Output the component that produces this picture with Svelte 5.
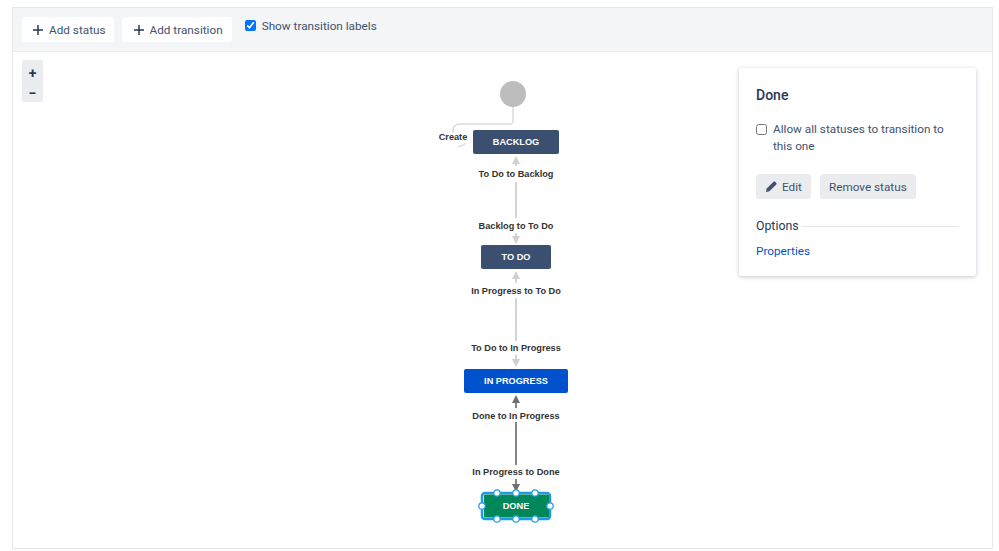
<script lang="ts">
  const nodes = [
    { name: 'BACKLOG', x: 473, y: 130, w: 86, h: 24, color: '#3b5070' },
    { name: 'TO DO', x: 481, y: 245, w: 70, h: 24, color: '#3b5070' },
    { name: 'IN PROGRESS', x: 464, y: 369, w: 104, h: 24, color: '#0052cc' }
  ]

  const labels = [
    { text: 'To Do to Backlog', y: 174 },
    { text: 'Backlog to To Do', y: 226 },
    { text: 'In Progress to To Do', y: 291 },
    { text: 'To Do to In Progress', y: 348 },
    { text: 'Done to In Progress', y: 416 },
    { text: 'In Progress to Done', y: 472 }
  ]

  const handles = [
    [497, 493], [516, 493], [535, 493],
    [482, 506], [550, 506],
    [497, 519], [516, 519], [535, 519]
  ]
</script>

<div class="page">
  <div class="frame">
    <div class="toolbar">
      <button class="tool">
        <svg width="12" height="12" viewBox="0 0 12 12"><path d="M6 1v10M1 6h10" /></svg>
        Add status
      </button>
      <button class="tool">
        <svg width="12" height="12" viewBox="0 0 12 12"><path d="M6 1v10M1 6h10" /></svg>
        Add transition
      </button>
      <label class="show-labels">
        <input type="checkbox" checked />
        <span>Show transition labels</span>
      </label>
    </div>

    <div class="canvas">
      <div class="zoom">
        <span>+</span>
        <span>−</span>
      </div>

      <svg class="diagram" width="999" height="551" viewBox="0 0 999 551">
        <circle cx="513" cy="94" r="13" fill="#bdbdbd" />
        <path class="edge thin" d="M513 107v14q0 3-3 3h-50q-7 0-7 7v2" />
        <path class="edge thin" d="M465 143l-1 2-6 2" />

        <path class="edge" d="M516 163v3M516 182v36" />
        <path class="head" d="M516 156l4 8h-8z" />
        <path class="edge" d="M516 233v5" />
        <path class="head" d="M516 244l-4-8h8z" />

        <path class="edge" d="M516 278v5M516 298v43" />
        <path class="head" d="M516 271l4 8h-8z" />
        <path class="edge" d="M516 355v6" />
        <path class="head" d="M516 367l-4-8h8z" />

        <path class="edge dark" d="M516 402v6M516 422v43" />
        <path class="head dark" d="M516 395l4 8h-8z" />
        <path class="edge dark" d="M516 479v6" />
        <path class="head dark" d="M516 492l-4-8h8z" />

        <text class="label" x="453" y="140" text-anchor="middle">Create</text>
        {#each labels as l}
          <text class="label" x="516" y={l.y + 3} text-anchor="middle">{l.text}</text>
        {/each}

        {#each nodes as n}
          <rect x={n.x} y={n.y} width={n.w} height={n.h} rx="2" fill={n.color} />
          <text class="node" x={n.x + n.w / 2} y={n.y + 15} text-anchor="middle">{n.name}</text>
        {/each}

        <rect class="selection" x="482" y="493" width="68" height="26" rx="3" />
        <rect x="484" y="494.500" width="65" height="23" rx="1" fill="#00875a" />
        <text class="node" x="516" y="509" text-anchor="middle">DONE</text>
        {#each handles as [cx, cy]}
          <circle class="handle" {cx} {cy} r="3.200" />
        {/each}
      </svg>

      <aside class="panel">
        <h3>Done</h3>
        <label class="allow">
          <input type="checkbox" />
          <span>Allow all statuses to transition to this one</span>
        </label>
        <div class="actions">
          <button class="grey">
            <svg width="13" height="13" viewBox="0 0 13 13">
              <path d="M1 12l.7-3.400L8.600 1.700a1 1 0 0 1 1.400 0l1.300 1.300a1 1 0 0 1 0 1.400L4.400 11.300z" fill="#42526e" />
            </svg>
            Edit
          </button>
          <button class="grey">Remove status</button>
        </div>
        <div class="options">
          <span>Options</span>
          <i></i>
        </div>
        <a href="#properties">Properties</a>
      </aside>
    </div>
  </div>
</div>

<style>
  :global(body) {
    margin: 0;
    background: #fff;
  }
  .page {
    width: 999px;
    height: 551px;
    padding: 7px 6px 2px 12px;
    box-sizing: border-box;
    font-family: Roboto, "Open Sans", sans-serif;
    font-size: 11.750px;
    color: #42526e;
  }
  .frame {
    height: 100%;
    border: 1px solid #e6e8ec;
    box-sizing: border-box;
    display: flex;
    flex-direction: column;
  }
  .toolbar {
    height: 44px;
    flex: none;
    box-sizing: border-box;
    background: #f4f5f7;
    border-bottom: 1px solid #ebecf0;
    display: flex;
    align-items: flex-start;
    padding: 9px 0 0 9px;
    gap: 8px;
  }
  button {
    font: inherit;
    color: inherit;
    border: 0;
    border-radius: 3px;
    display: flex;
    align-items: center;
    padding: 0;
  }
  .tool {
    background: #fff;
    height: 25px;
    padding: 0 8px 0 10px;
    box-sizing: border-box;
    gap: 5px;
  }
  .tool + .tool {
    padding: 0 9px 0 11px;
  }
  .tool svg path {
    stroke: #253858;
    stroke-width: 1.500;
    fill: none;
  }
  .show-labels {
    display: flex;
    align-items: center;
    gap: 6px;
    margin: 0 0 0 5px;
    height: 16px;
  }
  .show-labels span {
    margin-top: 1px;
  }
  .show-labels input {
    width: 11px;
    height: 11px;
    margin: 0;
  }
  .canvas {
    flex: 1;
    position: relative;
  }
  .zoom {
    position: absolute;
    left: 9px;
    top: 8px;
    width: 21px;
    height: 42px;
    padding-top: 3px;
    box-sizing: border-box;
    background: #ebecf0;
    border-radius: 2px;
    display: flex;
    flex-direction: column;
    align-items: center;
    color: #253858;
    font-weight: 700;
    font-size: 14px;
    line-height: 20px;
  }
  .diagram {
    position: absolute;
    left: -13px;
    top: -52px;
  }
  .edge {
    stroke: #d4d4d4;
    stroke-width: 2;
    fill: none;
  }
  .edge.thin {
    stroke: #dcdcdc;
    stroke-width: 1.500;
  }
  .edge.dark {
    stroke: #858585;
  }
  .head {
    fill: #d0d0d0;
  }
  .head.dark {
    fill: #707070;
  }
  .label {
    font: 700 9.200px "Liberation Sans", sans-serif;
    fill: #333;
  }
  .node {
    font: 700 9.200px "Liberation Sans", sans-serif;
    fill: #fff;
  }
  .selection {
    fill: #fff;
    stroke: #1e9be8;
    stroke-width: 2.500;
  }
  .handle {
    fill: #fff;
    stroke: #1e9be8;
    stroke-width: 1.200;
  }
  .panel {
    position: absolute;
    left: 726px;
    top: 16px;
    width: 237px;
    height: 208px;
    box-sizing: border-box;
    background: #fff;
    border-radius: 3px;
    box-shadow: 0 1px 4px rgba(9, 30, 66, 0.25);
    padding: 18px 17px;
  }
  h3 {
    margin: 0;
    font-size: 14px;
    font-weight: 500;
    line-height: 18px;
    color: #253858;
  }
  .allow {
    display: flex;
    gap: 6px;
    margin-top: 17px;
    line-height: 17px;
  }
  .allow input {
    width: 11px;
    height: 11px;
    margin: 3px 0 0;
    flex: none;
  }
  .actions {
    display: flex;
    gap: 9px;
    margin-top: 19px;
  }
  .grey {
    background: #ebecf0;
    height: 25px;
    padding: 0 9px;
    gap: 4px;
  }
  .options {
    display: flex;
    align-items: center;
    gap: 3px;
    margin-top: 18px;
    color: #253858;
    font-size: 12.300px;
    line-height: 18px;
  }
  .options i {
    flex: 1;
    height: 1px;
    background: #e3e5e9;
  }
  a {
    display: block;
    margin-top: 8px;
    color: #0052cc;
    text-decoration: none;
    line-height: 17px;
  }
</style>
